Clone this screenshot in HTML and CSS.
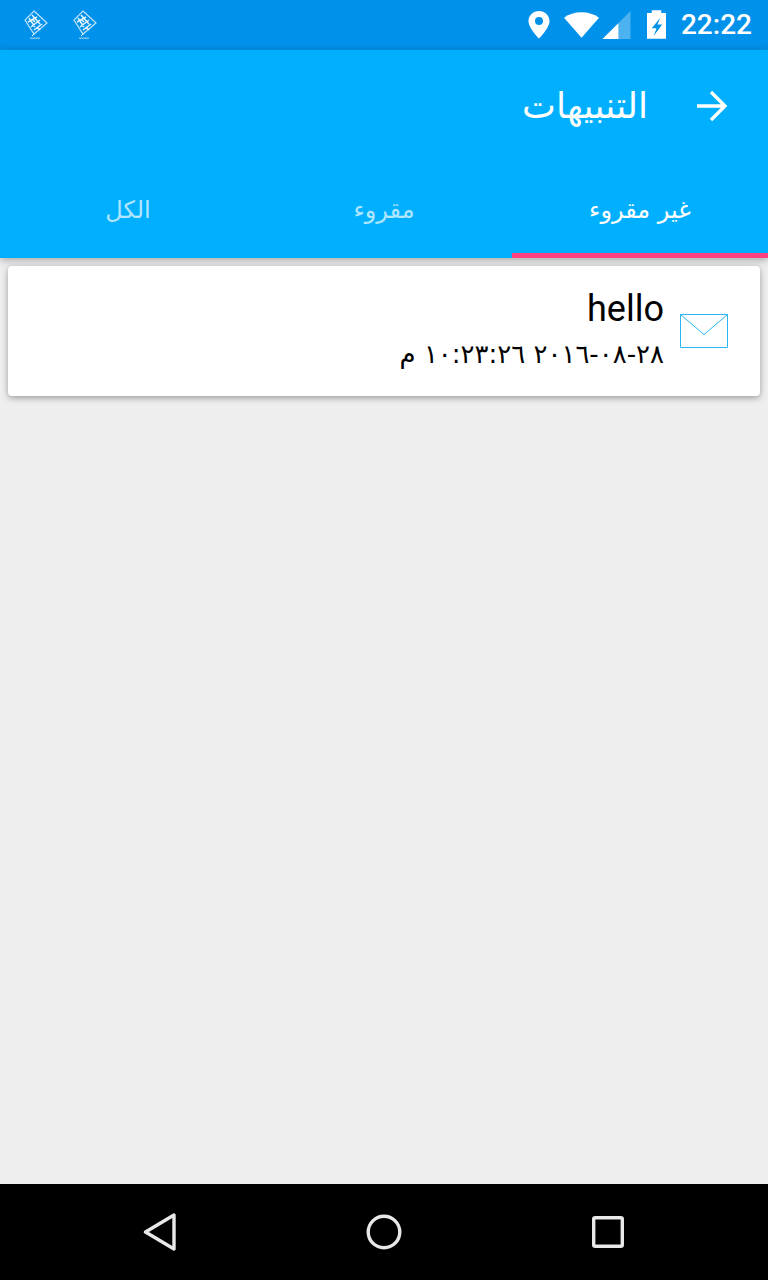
FILE: index.html
```html
<!DOCTYPE html>
<html lang="ar">
<head>
<meta charset="utf-8">
<title>التنبيهات</title>
<link rel="stylesheet" href="styles.css">
</head>
<body>
<div class="screen">
  <div class="status">
    <div class="status-apps">
      <svg class="app-icon" viewBox="0 0 26 30"><g fill="none" stroke="#fff"><path d="M11 1l13 12-13 11L2 10z" stroke-width="1.200" stroke-opacity=".75"/><path d="M6 8l6 9M9 5l8 9M5 12l9-5M8 17l9-7M11 20l8-6M10 10l2 2M14 17l3 3" stroke-width="1.500" stroke-opacity=".9"/><path d="M11 24l-2 2" stroke-width="1"/></g><rect x="7" y="27.500" width="10" height="1.500" fill="#fff" fill-opacity=".45"/></svg>
      <svg class="app-icon" viewBox="0 0 26 30"><g fill="none" stroke="#fff"><path d="M11 1l13 12-13 11L2 10z" stroke-width="1.200" stroke-opacity=".75"/><path d="M6 8l6 9M9 5l8 9M5 12l9-5M8 17l9-7M11 20l8-6M10 10l2 2M14 17l3 3" stroke-width="1.500" stroke-opacity=".9"/><path d="M11 24l-2 2" stroke-width="1"/></g><rect x="7" y="27.500" width="10" height="1.500" fill="#fff" fill-opacity=".45"/></svg>
    </div>
    <div class="status-right">
      <svg class="ic-pin" viewBox="0 0 22 29"><path fill="#fff" fill-rule="evenodd" d="M11 1C5 1 .5 5.500.5 11.200.5 18 11 28.500 11 28.500S21.500 18 21.500 11.200C21.500 5.500 17 1 11 1zm0 14a4 4 0 1 1 0-8 4 4 0 0 1 0 8z"/></svg>
      <svg class="ic-wifi" viewBox="0 0 36 26"><path fill="#fff" d="M18 26L0 5.500C5 2 11 0 18 0s13 2 18 5.500z"/></svg>
      <svg class="ic-signal" viewBox="0 0 30 30"><path fill="#fff" fill-opacity=".3" d="M30 0v30H0z"/><path fill="#fff" d="M17 13v17H0z"/></svg>
      <svg class="ic-batt" viewBox="0 0 20 30"><path fill="#fff" fill-rule="evenodd" d="M5 0h10v3h5v27H0V3h5zM14 8L5 19h5l-3 8 9-12h-5z"/></svg>
      <span class="clock">22:22</span>
    </div>
  </div>
  <header class="appbar" dir="rtl">
    <div class="toolbar">
      <svg class="ic-back" viewBox="0 0 34 34"><path fill="none" stroke="#fff" stroke-width="3.300" d="M3 17h28M17 3l14 14-14 14"/></svg>
      <h1 class="title">التنبيهات</h1>
    </div>
    <nav class="tabs">
      <div class="tab tab-active">غير مقروء</div>
      <div class="tab">مقروء</div>
      <div class="tab">الكل</div>
    </nav>
  </header>
  <main class="content" dir="rtl">
    <article class="card">
      <svg class="ic-mail" viewBox="0 0 48 34"><path fill="none" stroke="#29b6f6" d="M.5.500h47v33H.5zM.5.500L24 20.500 47.500.500"/></svg>
      <div class="card-text">
        <div class="card-title">hello</div>
        <div class="card-date">٢٨-٠٨-٢٠١٦ ١٠:٢٣:٢٦ م</div>
      </div>
    </article>
  </main>
  <footer class="navbar">
    <svg class="nav-back" viewBox="0 0 34 38"><path fill="none" stroke="#e8e8e8" stroke-width="3.400" stroke-linejoin="round" d="M2.500 19L31 2v34z"/></svg>
    <svg class="nav-home" viewBox="0 0 36 36"><circle cx="18" cy="18" r="15.800" fill="none" stroke="#e8e8e8" stroke-width="3.400"/></svg>
    <svg class="nav-recent" viewBox="0 0 32 32"><rect x="1.700" y="1.700" width="28.600" height="28.600" rx="1.500" fill="none" stroke="#e8e8e8" stroke-width="3.400"/></svg>
  </footer>
</div>
</body>
</html>
```

FILE: styles.css
```css
html, body { margin: 0; padding: 0; }
body { background: #eee; font-family: "DejaVu Sans", "Noto Sans", sans-serif; }
.screen { width: 768px; height: 1280px; display: flex; flex-direction: column; overflow: hidden; }

.status { height: 50px; flex: none; background: #0091ea; display: flex; justify-content: space-between; align-items: center; }
.status-apps { display: flex; gap: 23px; padding-left: 23px; }
.app-icon { width: 26px; height: 30px; display: block; }
.status-right { display: flex; align-items: center; padding-right: 16px; }
.ic-pin { width: 22px; height: 29px; margin-right: 14px; margin-top: -1px; }
.ic-wifi { width: 35px; height: 28px; margin-right: 3px; margin-top: 0; }
.ic-signal { width: 29px; height: 28px; margin-right: 16px; margin-top: 0; }
.ic-batt { width: 19px; height: 29px; margin-right: 15px; margin-top: -1px; }
.clock { color: #fff; font: 500 28px/50px Roboto, sans-serif; }

.appbar { height: 208px; flex: none; background: #00b0ff; display: flex; flex-direction: column; box-shadow: 0 2px 8px rgba(0,0,0,.3); }
.toolbar { height: 112px; display: flex; align-items: center; padding-right: 40px; box-sizing: border-box; }
.ic-back { width: 34px; height: 34px; flex: none; }
.title { margin: 0 46px 0 0; color: #fff; font-size: 36px; font-weight: 400; line-height: 106px; }
.tabs { height: 96px; display: flex; }
.tab { flex: 1; color: rgba(255,255,255,.7); font-size: 24px; line-height: 96px; text-align: center; box-sizing: border-box; }
.tab-active { color: #fff; border-bottom: 5px solid #ff4081; }

.content { flex: 1; padding: 8px; }
.card { height: 130px; background: #fff; border-radius: 4px; box-shadow: 0 2px 6px rgba(0,0,0,.35); display: flex; align-items: flex-start; padding: 24px 32px 0 0; box-sizing: border-box; }
.ic-mail { width: 48px; height: 34px; flex: none; margin-top: 24px; }
.card-text { margin-right: 16px; }
.card-title { color: #000; font: 400 36px/38px Roboto, sans-serif; }
.card-date { color: #000; font-size: 26px; line-height: 42px; margin-top: 5px; }

.navbar { height: 96px; flex: none; background: #000; display: flex; align-items: center; }
.navbar svg { display: block; }
.nav-back { width: 34px; height: 38px; margin-left: 143px; }
.nav-home { width: 36px; height: 36px; margin-left: 189px; }
.nav-recent { width: 32px; height: 32px; margin-left: 190px; }
```
